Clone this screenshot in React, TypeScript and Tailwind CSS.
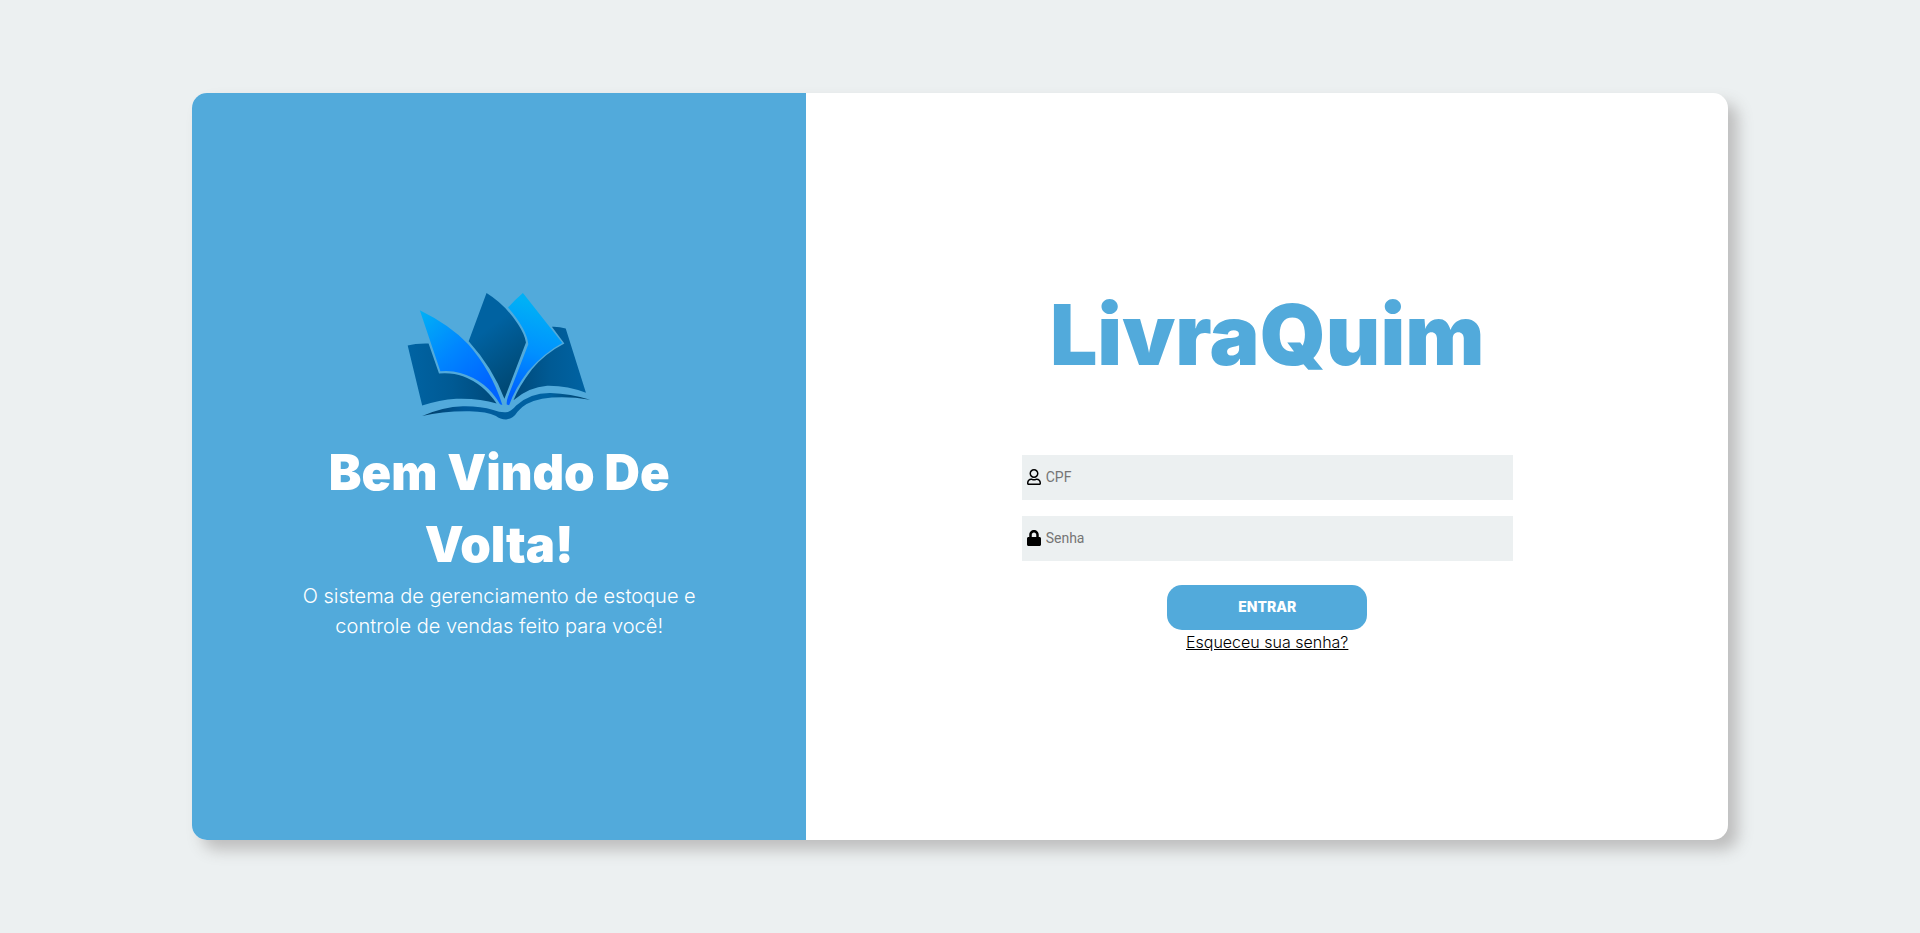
import { FaLock, FaRegUser } from "react-icons/fa";
import type { ReactNode } from "react";

function BookLogo() {
  return (
    <svg viewBox="54 63 546 381" className="w-[184px]" role="img" aria-label="LivraQuim">
      <defs>
        <linearGradient id="pageLeft" x1="0" y1="0" x2="1" y2="0">
          <stop offset="0" stopColor="#0063a3" />
          <stop offset="0.5" stopColor="#005a94" />
          <stop offset="1" stopColor="#00497a" />
        </linearGradient>
        <linearGradient id="pageRight" x1="1" y1="0" x2="0" y2="0">
          <stop offset="0" stopColor="#0063a3" />
          <stop offset="0.5" stopColor="#005a94" />
          <stop offset="1" stopColor="#00497a" />
        </linearGradient>
        <linearGradient id="pageMiddle" x1="0.3" y1="0" x2="0.7" y2="1">
          <stop offset="0.3" stopColor="#0062a1" />
          <stop offset="1" stopColor="#00456e" />
        </linearGradient>
        <linearGradient id="leafLeft" gradientUnits="userSpaceOnUse" x1="92" y1="125" x2="290" y2="345">
          <stop offset="0" stopColor="#00b0f6" />
          <stop offset="0.5" stopColor="#0086ff" />
          <stop offset="1" stopColor="#0064ff" />
        </linearGradient>
        <linearGradient id="leafRight" gradientUnits="userSpaceOnUse" x1="440" y1="100" x2="360" y2="370">
          <stop offset="0" stopColor="#00b0f6" />
          <stop offset="0.5" stopColor="#0090ff" />
          <stop offset="1" stopColor="#0060ff" />
        </linearGradient>
        <linearGradient id="spine" x1="0" y1="0" x2="1" y2="0">
          <stop offset="0" stopColor="#003c63" />
          <stop offset="0.25" stopColor="#00599a" />
          <stop offset="0.75" stopColor="#0063a3" />
          <stop offset="1" stopColor="#003c63" />
        </linearGradient>
      </defs>
      <path fill="url(#pageLeft)" d="M56 222Q80 215 118 216L149 305Q190 302 220 313Q280 335 320 394Q270 378 200 380Q150 383 99 400Z" />
      <path fill="url(#pageRight)" d="M484 166Q505 165 525 171L585 362Q530 340 470 341Q415 345 370 384Q385 345 425 292Q465 245 521 216Z" />
      <path fill="url(#leafLeft)" d="M92 117Q180 160 235 217Q305 297 337 398L330 396Q290 325 212 303Q185 295 153 298Z" />
      <path fill="url(#pageMiddle)" d="M290 66Q345 100 383 158Q404 190 407 213L343 380Q310 290 237 209Z" />
      <path fill="url(#leafRight)" d="M398 66L515 214Q462 242 413 298Q375 348 357 399L350 397Q349 386 353 376L414 218Q410 175 354 109Q372 88 398 66Z" />
      <path fill="url(#spine)" d="M99 431Q160 404 220 402Q270 401 310 413Q330 421 347 420Q362 419 378 400Q420 362 480 363Q540 365 597 383Q520 370 455 380Q405 390 382 418Q368 440 348 441Q330 441 318 431Q290 418 240 417Q160 416 99 431Z" />
    </svg>
  );
}

type FieldProps = { id: string; label: string; type: string; icon: ReactNode };

function Field({ id, label, type, icon }: FieldProps) {
  return (
    <div className="flex h-[45px] w-full items-center gap-[5px] bg-[#ecf0f1] px-[5px]">
      <label htmlFor={id} aria-label={label} className="text-base text-black">
        {icon}
      </label>
      <input
        id={id}
        type={type}
        placeholder={label}
        className="min-w-0 flex-1 bg-transparent font-[Roboto,sans-serif] text-sm text-black outline-none placeholder:text-[#757575]"
      />
    </div>
  );
}

export default function App() {
  return (
    <div className="flex h-screen items-center justify-center bg-[#ecf0f1] font-[Inter,sans-serif]">
      <main className="flex h-4/5 w-4/5 overflow-hidden rounded-[15px] bg-white shadow-[10px_10px_15px_#bebebe]">
        <section className="flex w-2/5 flex-col items-center justify-center bg-[#52aadb] text-center text-white">
          <BookLogo />
          <h1 className="mt-4 w-[400px] text-[49px] leading-[72px] font-black">Bem Vindo De Volta!</h1>
          <p className="w-[400px] text-[20px] leading-[30px] font-light">
            O sistema de gerenciamento de estoque e controle de vendas feito para você!
          </p>
        </section>
        <section className="flex w-3/5 flex-col items-center justify-center">
          <h2 className="text-[84px] leading-[112px] font-black text-[#52aadb]">LivraQuim</h2>
          <form className="mt-16 flex w-[491px] flex-col items-center" onSubmit={(e) => e.preventDefault()}>
            <div className="flex w-full flex-col gap-4">
              <Field id="cpf" label="CPF" type="text" icon={<FaRegUser className="w-[14px]" />} />
              <Field id="senha" label="Senha" type="password" icon={<FaLock className="w-[14px]" />} />
            </div>
            <button type="submit" className="mt-6 h-[45px] w-[200px] rounded-[15px] bg-[#52aadb] text-sm font-extrabold text-white">
              ENTRAR
            </button>
            <a href="#" className="text-base leading-6 font-light text-black underline">
              Esqueceu sua senha?
            </a>
          </form>
        </section>
      </main>
    </div>
  );
}
